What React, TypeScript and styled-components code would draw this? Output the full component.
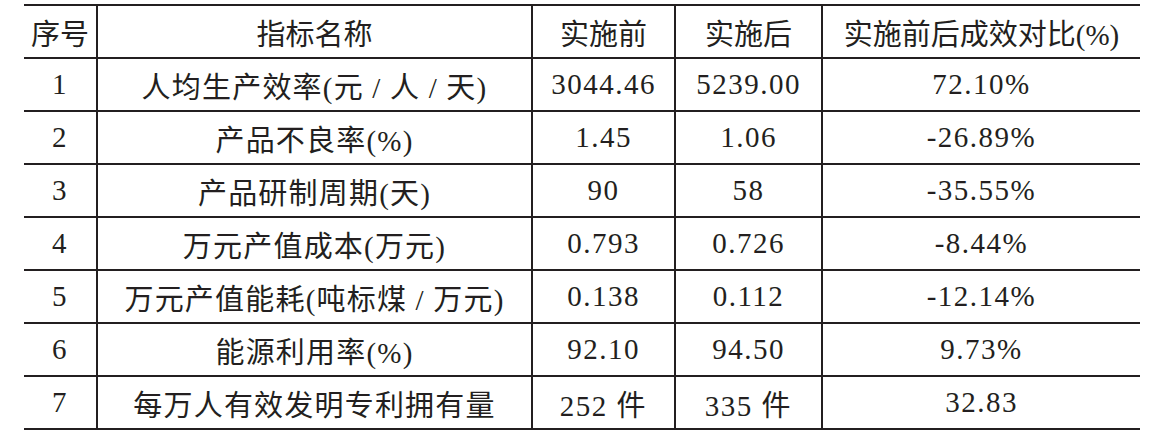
import styled, { createGlobalStyle } from "styled-components";

const GlobalStyle = createGlobalStyle`
	html, body {
		margin: 0;
		padding: 0;
		background: #fff;
	}
`;

const header = ["序号", "指标名称", "实施前", "实施后", "实施前后成效对比(%)"];

const rows = [
	["1", "人均生产效率(元 / 人 / 天)", "3044.46", "5239.00", "72.10%"],
	["2", "产品不良率(%)", "1.45", "1.06", "-26.89%"],
	["3", "产品研制周期(天)", "90", "58", "-35.55%"],
	["4", "万元产值成本(万元)", "0.793", "0.726", "-8.44%"],
	["5", "万元产值能耗(吨标煤 / 万元)", "0.138", "0.112", "-12.14%"],
	["6", "能源利用率(%)", "92.10", "94.50", "9.73%"],
	["7", "每万人有效发明专利拥有量", "252 件", "335 件", "32.83"],
];

const widths = [74, 435, 143, 147, 317];

const App = () => {
	return (
		<>
			<GlobalStyle />
			<Wrap>
				<Table>
					<colgroup>
						{widths.map((w, i) => (
							<col key={i} style={{ width: w }} />
						))}
					</colgroup>
					<thead>
						<tr>
							{header.map((h, i) => (
								<HeadCell key={i} $last={i === header.length - 1}>
									{h}
								</HeadCell>
							))}
						</tr>
					</thead>
					<tbody>
						{rows.map((r) => (
							<tr key={r[0]}>
								{r.map((c, i) => (
									<Cell key={i} $last={i === r.length - 1} $spacing={i === 1 ? 1.2 : 1.5}>
										{c}
									</Cell>
								))}
							</tr>
						))}
					</tbody>
				</Table>
			</Wrap>
		</>
	);
};

const Wrap = styled.div`
	padding: 4px 0 0 24px;
`;

const Table = styled.table`
	width: 1116px;
	table-layout: fixed;
	border-collapse: separate;
	border-spacing: 0;
	color: #231f20;
	font-family: "Liberation Serif", "Noto Sans CJK SC", serif;
	font-size: 29px;
	border-top: 2px solid #231f20;
`;

const HeadCell = styled.th<{ $last?: boolean }>`
	box-sizing: border-box;
	height: 53px;
	padding: 0;
	font-weight: 400;
	text-align: center;
	vertical-align: middle;
	white-space: nowrap;
	border-bottom: 2px solid #231f20;
	border-right: ${(p) => (p.$last ? "none" : "2px solid #231f20")};
`;

const Cell = styled.td<{ $last?: boolean; $spacing: number }>`
	box-sizing: border-box;
	height: 53px;
	padding: 0;
	text-align: center;
	vertical-align: middle;
	white-space: nowrap;
	letter-spacing: ${(p) => p.$spacing}px;
	border-bottom: 2px solid #231f20;
	border-right: ${(p) => (p.$last ? "none" : "2px solid #231f20")};
`;

export default App;
